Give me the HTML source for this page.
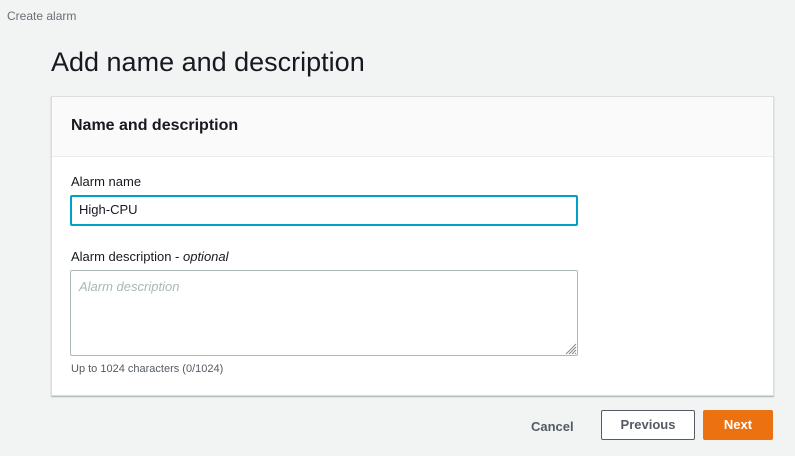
<!DOCTYPE html>
<html><head><style>
body{margin:0;width:795px;height:456px;background:#f2f3f3;font-family:"Liberation Sans",sans-serif;position:relative;overflow:hidden;color:#16191f}
.a{position:absolute}
</style></head><body>
<div class="a" style="left:7px;top:9px;font-size:12px;color:#687078">Create alarm</div>
<div class="a" style="left:51px;top:47px;font-size:27px;color:#16191f">Add name and description</div>
<div class="a" style="left:51px;top:96px;width:721px;height:298px;background:#fff;border:1px solid #dcdede;box-shadow:0 1px 1px rgba(0,28,36,.3)">
  <div style="height:59px;background:#fafafa;border-bottom:1px solid #eaeded"></div>
</div>
<div class="a" style="left:71px;top:117px;font-size:16px;font-weight:bold">Name and description</div>
<div class="a" style="left:71px;top:174px;font-size:13px">Alarm name</div>
<div class="a" style="left:70px;top:195px;width:504px;height:27px;border:2px solid #00a1c9;border-radius:2px;background:#fff"></div>
<div class="a" style="left:79px;top:202px;font-size:13px">High-CPU</div>
<div class="a" style="left:71px;top:249px;font-size:13px">Alarm description - <i>optional</i></div>
<div class="a" style="left:70px;top:270px;width:506px;height:84px;border:1px solid #aab7b8;border-radius:2px;background:#fff"></div>
<div class="a" style="left:79px;top:279px;font-size:13px;font-style:italic;color:#aab7b8">Alarm description</div>
<svg class="a" style="left:565px;top:343px" width="12" height="12"><path d="M11 1L1 11M11 4L4 11M11 7L7 11M11 10L10 11" stroke="#888" stroke-width="1"/></svg>
<div class="a" style="left:71px;top:363px;font-size:11px;color:#545b64">Up to 1024 characters (0/1024)</div>
<div class="a" style="left:531px;top:419px;font-size:13px;font-weight:bold;color:#545b64">Cancel</div>
<div class="a" style="left:601px;top:410px;width:92px;height:28px;border:1px solid #545b64;border-radius:2px;background:#fff;text-align:center;line-height:28px;font-size:13px;font-weight:bold;color:#545b64">Previous</div>
<div class="a" style="left:703px;top:410px;width:70px;height:30px;background:#ec7211;border-radius:2px;text-align:center;line-height:30px;font-size:13px;font-weight:bold;color:#fff">Next</div>
</body></html>
